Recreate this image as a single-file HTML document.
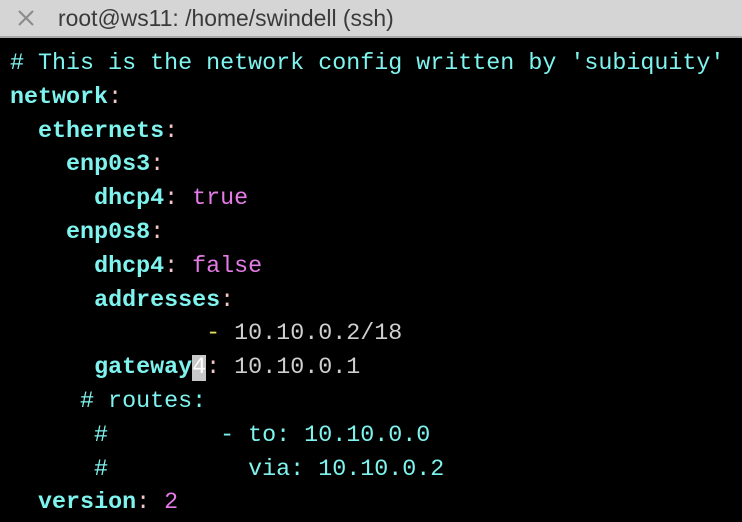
<!DOCTYPE html>
<html><head><style>
html,body{margin:0;padding:0;width:742px;height:522px;overflow:hidden;background:#000}
.bar{position:absolute;left:0;top:0;width:742px;height:36px;background:#d5d5d5;border-bottom:2px solid #a8a8a8;font-family:"Liberation Sans",sans-serif;font-size:22.9px;color:#3a3a3a}
.bar .t{position:absolute;left:58px;top:5px}
.bar svg{position:absolute;left:17px;top:9px}
pre{position:absolute;left:10px;top:48px;margin:0;font-family:"Liberation Mono",monospace;font-size:23.35px;line-height:33.8px;color:#7ff4ef}
b{font-weight:bold;color:#7ff4ef}
.c{color:#f4c8c8}.m{color:#e57be6}.g{color:#cfcfcf}.y{color:#e8e05a}
.cur{background:#c8c8c8;color:#fff}
</style></head><body>
<div class="bar"><svg width="18" height="18" viewBox="0 0 18 18"><path d="M2 2L16 16M16 2L2 16" stroke="#8a8a8a" stroke-width="2"/></svg><span class="t">root@ws11: /home/swindell (ssh)</span></div>
<pre># This is the network config written by 'subiquity'
<b>network</b><span class="c">:</span>
  <b>ethernets</b><span class="c">:</span>
    <b>enp0s3</b><span class="c">:</span>
      <b>dhcp4</b><span class="c">:</span> <span class="m">true</span>
    <b>enp0s8</b><span class="c">:</span>
      <b>dhcp4</b><span class="c">:</span> <span class="m">false</span>
      <b>addresses</b><span class="c">:</span>
              <span class="y">-</span> <span class="g">10.10.0.2/18</span>
      <b>gateway</b><span class="cur">4</span><span class="c">:</span> <span class="g">10.10.0.1</span>
     # routes:
      #        - to: 10.10.0.0
      #          via: 10.10.0.2
  <b>version</b><span class="c">:</span> <span class="m">2</span></pre>
</body></html>
